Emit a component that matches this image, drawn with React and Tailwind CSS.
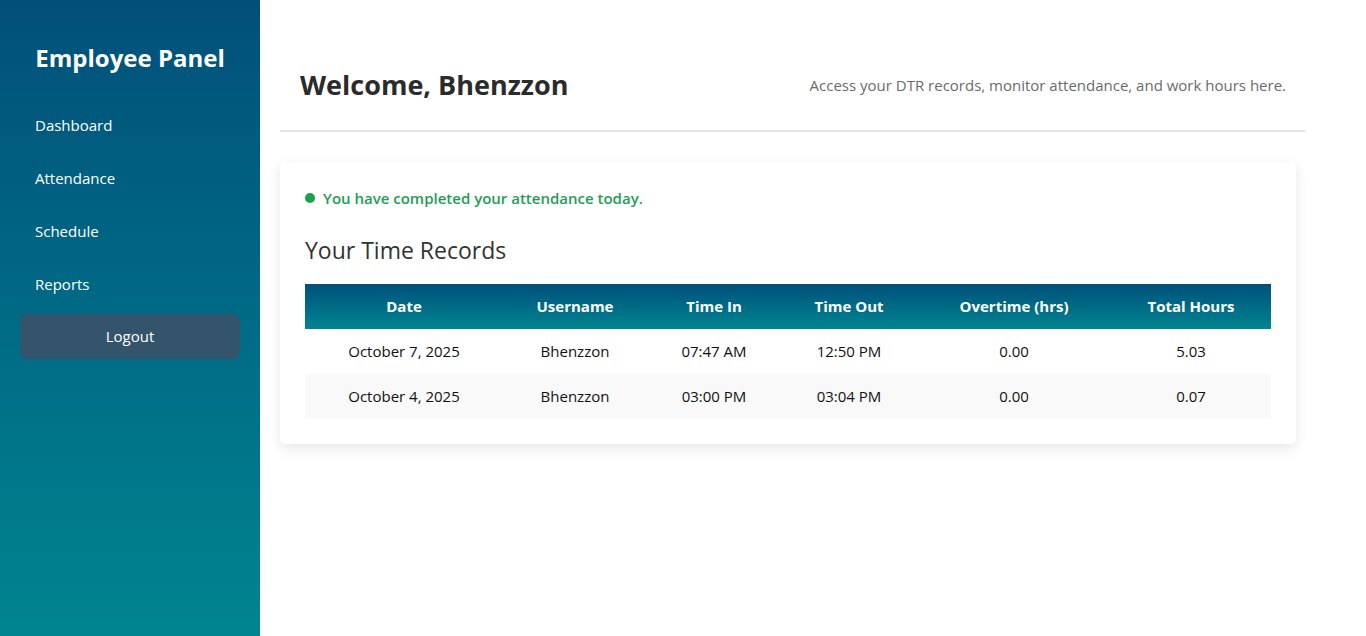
const records = [
  { date: 'October 7, 2025', user: 'Bhenzzon', timeIn: '07:47 AM', timeOut: '12:50 PM', ot: '0.00', total: '5.03' },
  { date: 'October 4, 2025', user: 'Bhenzzon', timeIn: '03:00 PM', timeOut: '03:04 PM', ot: '0.00', total: '0.07' },
];

const cols = [
  { label: 'Date', w: 'w-[198px]' },
  { label: 'Username', w: 'w-[144px]' },
  { label: 'Time In', w: 'w-[134px]' },
  { label: 'Time Out', w: 'w-[136px]' },
  { label: 'Overtime (hrs)', w: 'w-[194px]' },
  { label: 'Total Hours', w: 'w-[160px]' },
];

export default function App() {
  return (
    <div className="flex h-[636px] w-full overflow-hidden bg-white font-['Open_Sans',sans-serif]">
      <aside className="flex w-[260px] shrink-0 flex-col bg-gradient-to-b from-[#02507a] to-[#008590] px-5 text-white">
        <h2 className="mt-[40px] h-[36px] text-center text-[24px] leading-[36px] font-bold">Employee Panel</h2>
        <nav className="mt-[23px] flex flex-col">
          {['Dashboard', 'Attendance', 'Schedule', 'Reports'].map((item) => (
            <a key={item} className="block h-[53px] px-[15px] text-[15px] leading-[53px] text-white">{item}</a>
          ))}
          <button className="mt-[3px] h-[45px] rounded-lg bg-[#34546b] text-[15px] text-white">Logout</button>
        </nav>
      </aside>

      <main className="flex-1 pt-[41px] pr-[60px] pl-5">
        <header className="flex h-[91px] items-center justify-between border-b-2 border-[#e6e6e6] px-5">
          <h1 className="text-[27px] font-bold text-[#2b2b2b]">Welcome, Bhenzzon</h1>
          <p className="text-[15px] text-[#6b6b6b]">Access your DTR records, monitor attendance, and work hours here.</p>
        </header>

        <section className="mt-[30px] mr-[10px] rounded-md bg-white p-[25px] shadow-[0_4px_14px_rgba(0,0,0,0.1)]">
          <div className="flex h-[22px] items-center gap-2 text-[15px] font-semibold text-[#1f9d55]">
            <span className="h-[10px] w-[10px] rounded-full bg-[#16a34a]" />
            You have completed your attendance today.
          </div>
          <h3 className="mt-[26px] h-[30px] text-[23px] leading-[30px] text-[#333]">Your Time Records</h3>

          <table className="mt-[19px] w-full table-fixed border-collapse text-[15px]">
            <thead>
              <tr className="h-[45px] bg-gradient-to-b from-[#02507a] to-[#008590] text-white">
                {cols.map((c) => (
                  <th key={c.label} className={`${c.w} font-bold`}>{c.label}</th>
                ))}
              </tr>
            </thead>
            <tbody>
              {records.map((r, i) => (
                <tr key={r.date} className={`h-[45px] text-center text-[#111] ${i % 2 ? 'bg-[#f9f9f9]' : 'bg-white'}`}>
                  <td>{r.date}</td>
                  <td>{r.user}</td>
                  <td>{r.timeIn}</td>
                  <td>{r.timeOut}</td>
                  <td>{r.ot}</td>
                  <td>{r.total}</td>
                </tr>
              ))}
            </tbody>
          </table>
        </section>
      </main>
    </div>
  );
}
